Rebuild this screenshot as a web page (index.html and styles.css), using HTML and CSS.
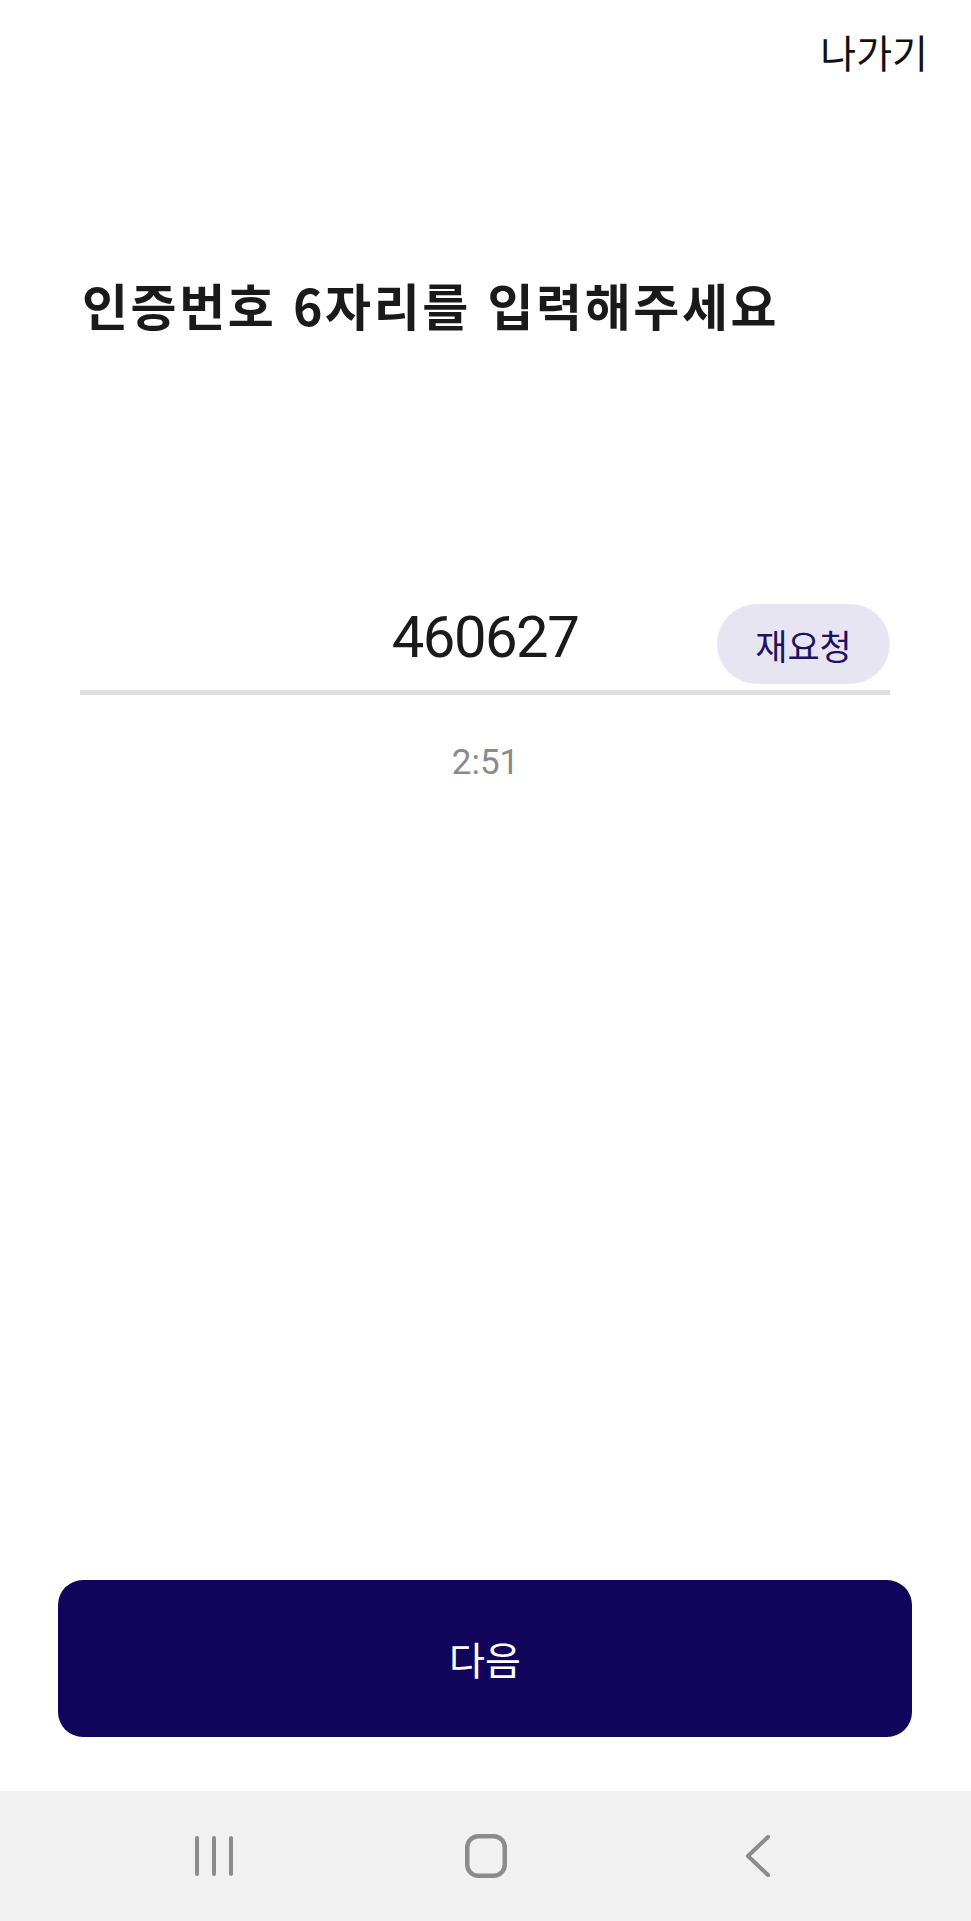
FILE: index.html
```html
<!DOCTYPE html>
<html lang="ko">
<head>
<meta charset="utf-8">
<title>인증번호 입력</title>
<link rel="stylesheet" href="styles.css">
</head>
<body>
<div class="screen">
  <header class="topbar">
    <span class="exit">나가기</span>
  </header>

  <h1 class="title">인증번호 6자리를 입력해주세요</h1>

  <div class="field">
    <span class="code">460627</span>
    <span class="resend">재요청</span>
  </div>
  <div class="timer">2:51</div>

  <div class="spacer"></div>

  <button class="next" type="button">다음</button>

  <nav class="navbar">
    <span class="nav-slot">
      <svg width="40" height="40" viewBox="0 0 40 40" fill="none" stroke="#8c8c8c" stroke-width="4" stroke-linecap="round">
        <line x1="3" y1="2" x2="3" y2="38"/>
        <line x1="20" y1="2" x2="20" y2="38"/>
        <line x1="37" y1="2" x2="37" y2="38"/>
      </svg>
    </span>
    <span class="nav-slot">
      <svg width="42" height="44" viewBox="0 0 42 44" fill="none" stroke="#8c8c8c" stroke-width="4.5">
        <rect x="2.25" y="2.25" width="37.5" height="39.5" rx="11"/>
      </svg>
    </span>
    <span class="nav-slot">
      <svg width="26" height="42" viewBox="0 0 26 42" fill="none" stroke="#8c8c8c" stroke-width="4" stroke-linecap="round" stroke-linejoin="round">
        <polyline points="23,2 3,21 23,40"/>
      </svg>
    </span>
  </nav>
</div>
</body>
</html>
```

FILE: styles.css
```css
html, body {
  margin: 0;
  padding: 0;
  background: #ffffff;
}

body {
  font-family: "Noto Sans CJK KR", "Noto Sans", sans-serif;
  color: #151515;
}

.screen {
  display: flex;
  flex-direction: column;
  height: 1921px;
  width: 971px;
  overflow: hidden;
}

.topbar {
  display: flex;
  justify-content: flex-end;
  padding: 32px 43px 0 0;
}

.exit {
  font-size: 39px;
  line-height: 1;
  color: #111111;
}

.title {
  margin: 208px 0 0 82px;
  font-size: 50px;
  line-height: 1;
  font-weight: 700;
  color: #1a1a1a;
  letter-spacing: 2.6px;
}

.field {
  margin: 275px 81px 0 80px;
  display: grid;
  grid-template-columns: 1fr auto 1fr;
  align-items: start;
  height: 80px;
  padding-bottom: 6px;
  border-bottom: 5px solid #dedede;
}

.code {
  grid-column: 2;
  margin-top: 4px;
  font-family: Roboto, "Noto Sans", sans-serif;
  font-size: 58px;
  line-height: 1;
  letter-spacing: -1.5px;
  color: #1a1a1a;
}

.resend {
  grid-column: 3;
  justify-self: end;
  width: 173px;
  height: 80px;
  border-radius: 40px;
  background: #e8e5f2;
  color: #1c1462;
  font-size: 35px;
  line-height: 1;
  display: flex;
  align-items: center;
  justify-content: center;
}

.timer {
  margin-top: 50px;
  text-align: center;
  font-family: Roboto, "Noto Sans", sans-serif;
  font-size: 35px;
  line-height: 1;
  color: #8a8a8a;
}

.spacer {
  flex: 1;
}

.next {
  margin: 0 59px 54px 58px;
  height: 157px;
  border: none;
  border-radius: 25px;
  background: #10055a;
  color: #ffffff;
  font-family: "Noto Sans CJK KR", "Noto Sans", sans-serif;
  font-size: 39px;
  line-height: 1;
  padding: 0;
}

.navbar {
  height: 130px;
  flex-shrink: 0;
  background: #f1f1f1;
  display: flex;
  justify-content: center;
  align-items: center;
  gap: 212px;
}

.nav-slot {
  width: 60px;
  display: flex;
  justify-content: center;
  align-items: center;
}

.nav-slot svg {
  display: block;
}
```
